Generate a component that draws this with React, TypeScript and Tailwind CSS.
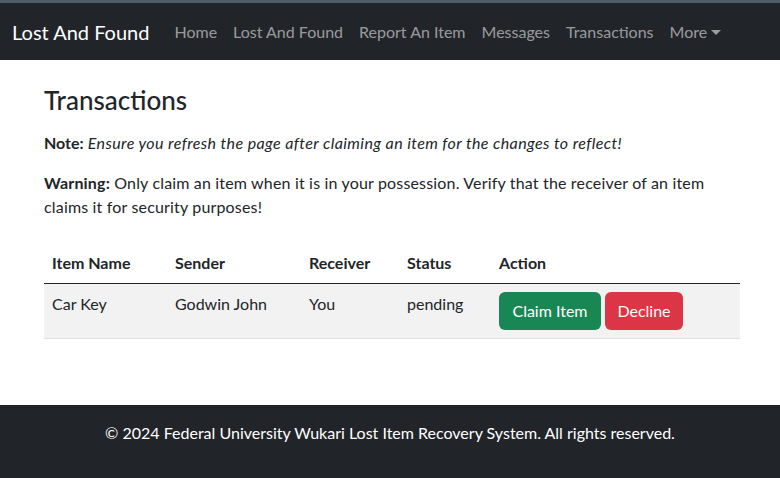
import React from "react"

const navLinks = ["Home", "Lost And Found", "Report An Item", "Messages", "Transactions"]

const rows = [{ item: "Car Key", sender: "Godwin John", receiver: "You", status: "pending" }]

export default function App() {
  return (
    <div className="flex min-h-[478px] flex-col bg-white text-[16px] leading-6 text-[#212529] [font-family:'Segoe_UI','Lato','Liberation_Sans',sans-serif]">
      <div className="h-[3px] bg-[#4c5d6a]" />
      <nav className="flex h-[57px] items-center bg-[#212529] px-3">
        <span className="mr-[17px] text-[20px] leading-[30px] text-white">Lost And Found</span>
        <ul className="flex items-center">
          {navLinks.map((l) => (
            <li key={l} className="px-2 text-[rgba(255,255,255,0.55)]">
              {l}
            </li>
          ))}
          <li className="flex items-center px-2 text-[rgba(255,255,255,0.55)]">
            More
            <span className="ml-[4px] mt-[2px] inline-block h-0 w-0 border-x-[5px] border-t-[5px] border-x-transparent border-t-[rgba(255,255,255,0.55)]" />
          </li>
        </ul>
      </nav>

      <main className="ml-[44px] w-[696px] pb-[66px]">
        <h2 className="mt-[23px] mb-[14px] text-[26px] font-medium leading-[34px]">Transactions</h2>
        <p className="mb-4">
          <strong className="font-bold">Note:</strong>{" "}
          <em className="tracking-[0.4px]">Ensure you refresh the page after claiming an item for the changes to reflect!</em>
        </p>
        <p className="mb-[24px] tracking-[0.17px]">
          <strong className="font-bold">Warning:</strong> Only claim an item when it is in your possession. Verify that the
          receiver of an item claims it for security purposes!
        </p>

        <table className="w-full border-collapse text-left">
          <thead>
            <tr className="border-b border-[#212529]">
              <th className="w-[123px] p-2 font-bold">Item Name</th>
              <th className="w-[134px] p-2 font-bold">Sender</th>
              <th className="w-[98px] p-2 font-bold">Receiver</th>
              <th className="w-[92px] p-2 font-bold">Status</th>
              <th className="p-2 font-bold">Action</th>
            </tr>
          </thead>
          <tbody>
            {rows.map((r) => (
              <tr key={r.item} className="border-b border-[#dee2e6] bg-[#f2f2f2]">
                <td className="p-2 align-top">{r.item}</td>
                <td className="p-2 align-top">{r.sender}</td>
                <td className="p-2 align-top">{r.receiver}</td>
                <td className="p-2 align-top">{r.status}</td>
                <td className="p-2 align-top">
                  <div className="flex gap-1">
                    <button className="h-[38px] w-[102px] rounded-md bg-[#198754] text-white">Claim Item</button>
                    <button className="h-[38px] w-[78px] rounded-md bg-[#dc3545] text-white">Decline</button>
                  </div>
                </td>
              </tr>
            ))}
          </tbody>
        </table>
      </main>

      <footer className="flex-1 bg-[#212529] pt-4 pb-4 text-center text-white">
        © 2024 Federal University Wukari Lost Item Recovery System. All rights reserved.
      </footer>
    </div>
  )
}
